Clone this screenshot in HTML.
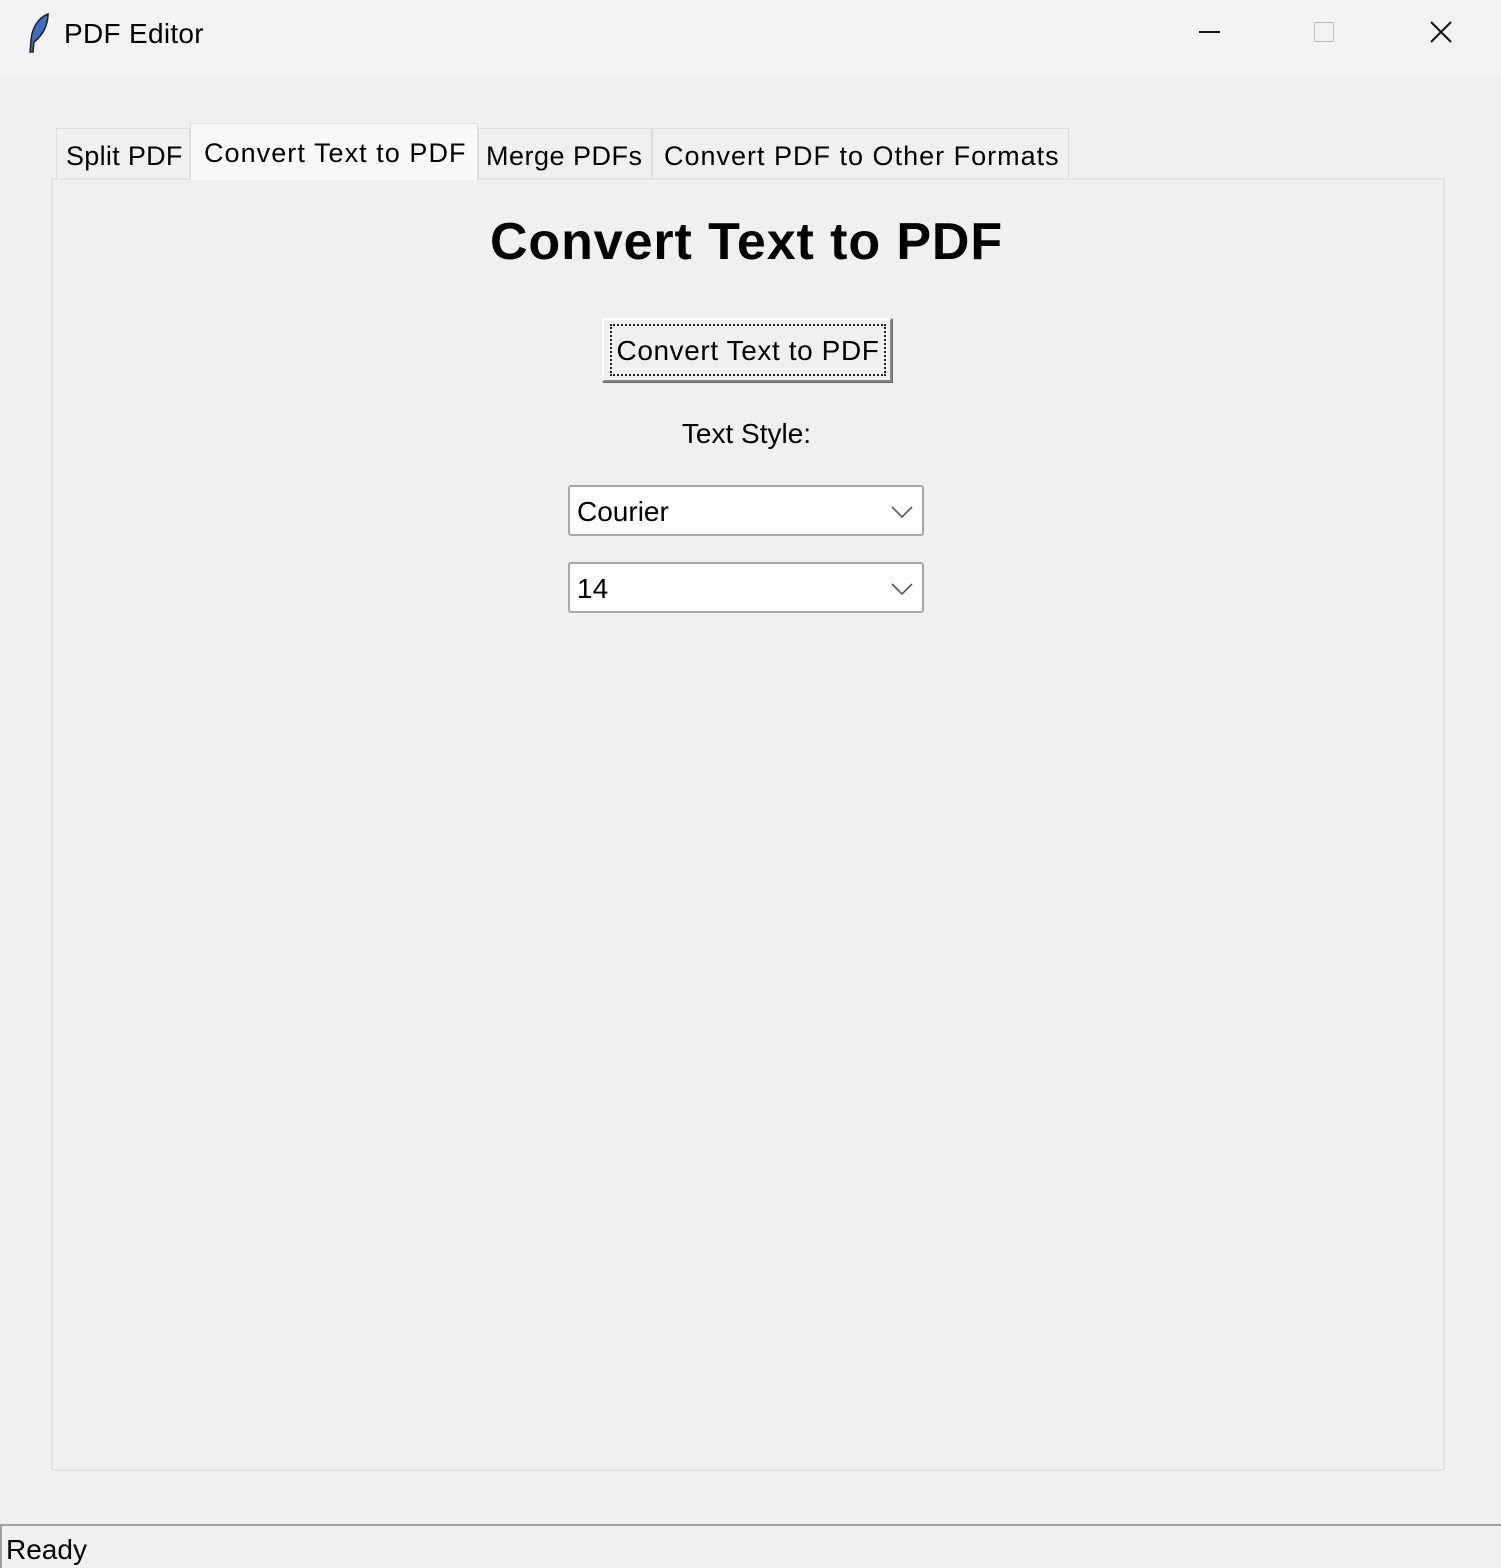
<!DOCTYPE html>
<html><head><style>
*{margin:0;padding:0;box-sizing:border-box}
body{width:1501px;height:1568px;background:#f0f0f0;position:relative;overflow:hidden;font-family:"Liberation Sans",sans-serif;color:#000}
.a{position:absolute;white-space:nowrap}
.tab{position:absolute;top:128px;height:50px;border:1px solid #dcdcdc;border-bottom:none;background:#f0f0f0;font-size:27px;line-height:54px;padding-left:9px;letter-spacing:1px;white-space:nowrap;overflow:hidden}
.combo{position:absolute;left:568px;width:356px;height:51px;background:#fff;border:2px solid #a8a8a8;border-radius:3px;font-size:28px;line-height:49px;padding-left:7px}
</style></head><body>
<div class="a" style="left:0;top:0;width:1501px;height:73px;background:#f3f3f3"></div>
<svg class="a" style="left:26px;top:12px" width="28" height="42" viewBox="0 0 28 42"><path d="M22 2 C12 6 6 16 5 28 L4 40 L7 40 L8 30 C16 24 22 14 22 2Z" fill="#3a6fc4" stroke="#222" stroke-width="1.5"/></svg>
<div class="a" style="left:64px;top:18px;font-size:28px;letter-spacing:0.3px">PDF Editor</div>
<div class="a" style="left:1199px;top:31px;width:21px;height:2px;background:#111"></div>
<div class="a" style="left:1314px;top:22px;width:20px;height:20px;border:1.5px solid #bbb;border-radius:2px"></div>
<svg class="a" style="left:1430px;top:21px" width="22" height="22"><path d="M1 1L21 21M21 1L1 21" stroke="#111" stroke-width="2"/></svg>
<div class="a" style="left:51px;top:178px;width:1394px;height:1293px;border:2px solid #e3e3e3"></div>
<div class="tab" style="left:56px;width:134px;letter-spacing:0.3px">Split PDF</div>
<div class="tab" style="left:478px;width:174px;padding-left:7px;letter-spacing:0.5px">Merge PDFs</div>
<div class="tab" style="left:652px;width:417px;padding-left:11px;letter-spacing:1.0px">Convert PDF to Other Formats</div>
<div class="tab" style="left:190px;top:123px;height:57px;width:288px;background:#f9f9f9;line-height:58px;padding-left:13px;letter-spacing:1.05px">Convert Text to PDF</div>
<div class="a" style="left:0;width:1501px;top:212px;text-align:center;font-weight:bold;font-size:52px;letter-spacing:0.9px"><span style="position:relative;left:-4px">Convert Text to PDF</span></div>
<div class="a" style="left:602px;top:318px;width:290px;height:64px;background:#f0f0f0;border:2px solid;border-color:#fff #888 #888 #fff;box-shadow:1px 1px 0 #666"></div>
<div class="a" style="left:610px;top:324px;width:276px;height:52px;border:2px dotted #222;font-size:28px;line-height:50px;text-align:center;letter-spacing:0.6px">Convert Text to PDF</div>
<div class="a" style="left:0;width:1501px;top:418px;text-align:center;font-size:28px"><span style="position:relative;left:-4px">Text Style:</span></div>
<div class="combo" style="top:485px">Courier</div>
<div class="combo" style="top:562px">14</div>
<svg class="a" style="left:891px;top:505px" width="22" height="14"><path d="M1 2L11 12L21 2" stroke="#555" stroke-width="1.6" fill="none"/></svg>
<svg class="a" style="left:891px;top:582px" width="22" height="14"><path d="M1 2L11 12L21 2" stroke="#555" stroke-width="1.6" fill="none"/></svg>
<div class="a" style="left:0;top:1524px;width:1501px;height:44px;border-top:2px solid #a0a0a0;border-left:2px solid #a0a0a0"></div>
<div class="a" style="left:6px;top:1534px;font-size:28px">Ready</div>
</body></html>
